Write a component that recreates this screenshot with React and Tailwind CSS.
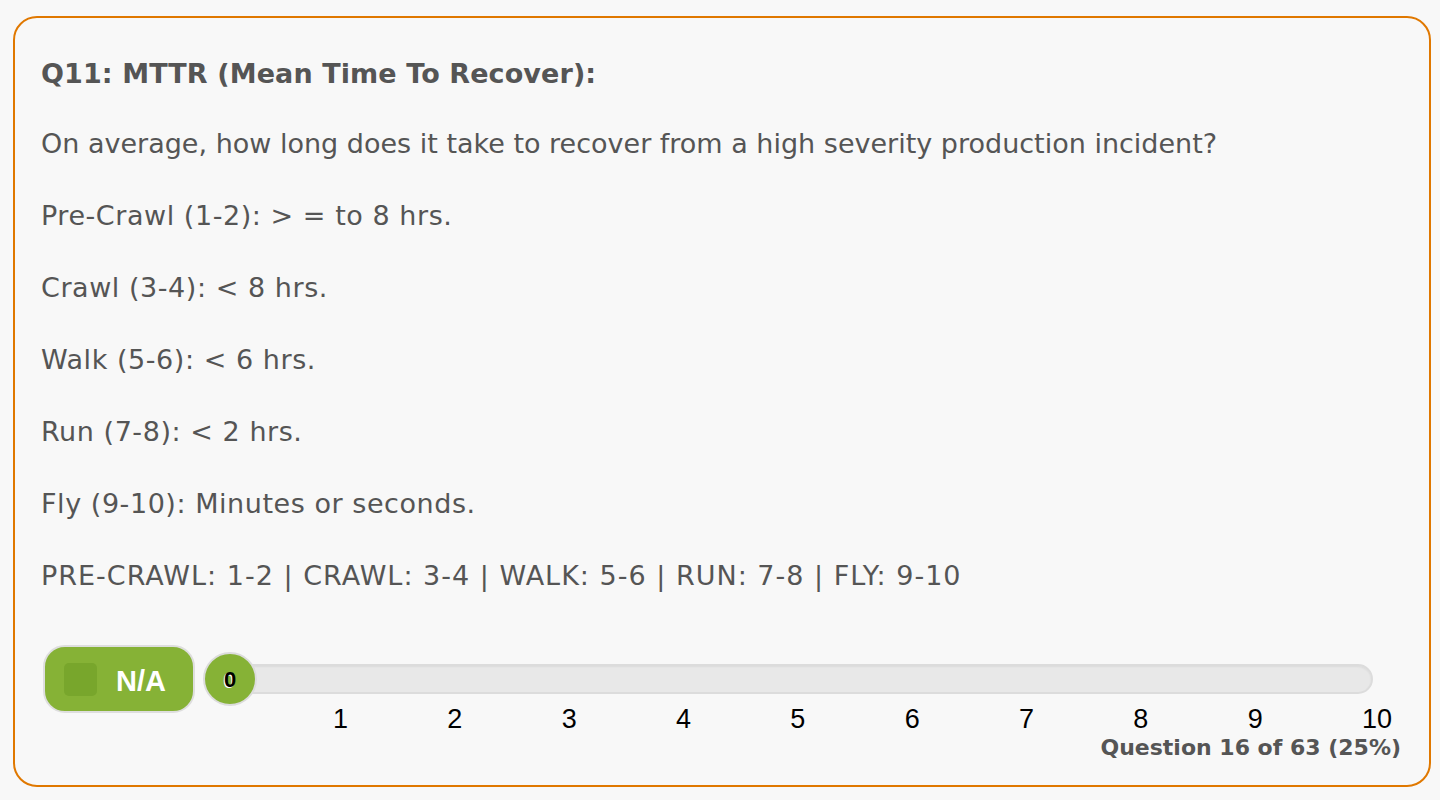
import { useState } from 'react'

const LEVELS = [
  'Pre-Crawl (1-2): > = to 8 hrs.',
  'Crawl (3-4): < 8 hrs.',
  'Walk (5-6): < 6 hrs.',
  'Run (7-8): < 2 hrs.',
  'Fly (9-10): Minutes or seconds.',
]

const SCALE = 'PRE-CRAWL: 1-2 | CRAWL: 3-4 | WALK: 5-6 | RUN: 7-8 | FLY: 9-10'

const TICKS = [1, 2, 3, 4, 5, 6, 7, 8, 9, 10]

export default function App() {
  const [value] = useState(0)

  return (
    <div className="min-h-[800px] bg-[#f8f8f8] pt-[16px] pb-[13px] pl-[13px] pr-[9px] font-['DejaVu_Sans',Verdana,sans-serif] text-[#555]">
      <div className="border-2 border-[#e07800] rounded-[24px] pt-[38px] pb-[25px] pl-[26px] pr-[28px]">
        <h2 className="text-[27px] leading-[36px] font-bold tracking-[0.1px] mb-[34px]">Q11: MTTR (Mean Time To Recover):</h2>
        <p className="text-[27px] leading-[36px] mb-[36px]">
          On average, how long does it take to recover from a high severity production incident?
        </p>
        {LEVELS.map((line, i) => (
          <p key={i} className="text-[27px] leading-[36px] tracking-[0.55px] mb-[36px]">{line}</p>
        ))}
        <p className="text-[27px] leading-[36px] tracking-[1px]">{SCALE}</p>

        <div className="flex items-start mt-[51px]">
          <button className="ml-[2px] w-[152px] h-[68px] shrink-0 flex items-center gap-[19px] pl-[19px] bg-[#86b236] border-2 border-[#dedede] rounded-[22px]">
            <span className="w-[33px] h-[33px] rounded-[5px] bg-[#78a62c]" />
            <span className="mt-[6px] text-white text-[29px] font-bold font-['Liberation_Sans',Arial,sans-serif]">N/A</span>
          </button>

          <div className="flex-1 ml-[8px] pt-[7px]">
            <div className="relative h-[54px] flex items-center mr-[28px]">
              <div className="w-full ml-[2px] h-[30px] rounded-full bg-[#e8e8e8] border-2 border-[#dcdcdc] shadow-[inset_0_1px_2px_rgba(0,0,0,0.06)]" />
              <div className="absolute left-0 top-0 w-[54px] h-[54px] rounded-full bg-[#86b236] border-2 border-[#dcdcdc] flex items-center justify-center">
                <span className="text-black text-[22px] font-bold font-['Liberation_Sans',Arial,sans-serif] [text-shadow:-1px_1px_0_#fff]">{value}</span>
              </div>
            </div>
            <div className="flex justify-between ml-[130px] mr-[9px] text-[27px] leading-[27px] text-black font-['Liberation_Sans',Arial,sans-serif]">
              {TICKS.map(t => <span key={t}>{t}</span>)}
            </div>
            <div className="mt-[3px] text-right text-[22px] leading-[24px] font-bold">Question 16 of 63 (25%)</div>
          </div>
        </div>
      </div>
    </div>
  )
}
